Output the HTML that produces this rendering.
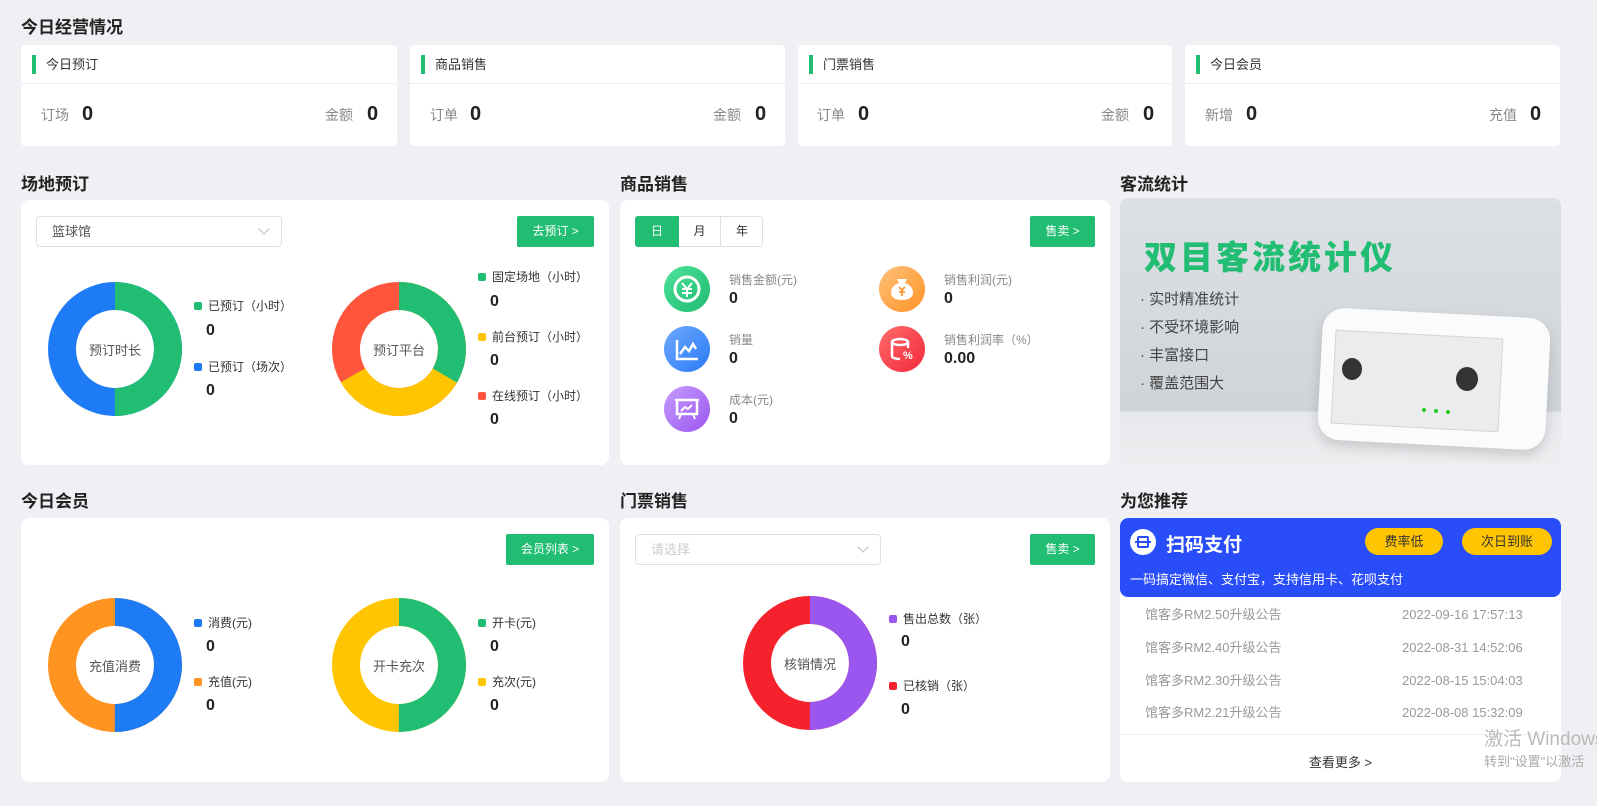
<!DOCTYPE html>
<html><head><meta charset="utf-8"><style>
*{box-sizing:border-box;margin:0;padding:0}
body{width:1597px;height:806px;background:#eef0f3;font-family:"Liberation Sans","Noto Sans CJK SC",sans-serif;position:relative;overflow:hidden;color:#333}
.abs{position:absolute}
.title{position:absolute;font-size:17px;font-weight:bold;color:#222}
.card{position:absolute;background:#fff;border-radius:4px}
.pan{position:absolute;background:#fff;border-radius:8px}
.tc .hd{height:39px;border-bottom:1px solid #eceef2;font-size:13px;line-height:39px;padding-left:25px;position:relative;color:#333}
.tc .hd:before{content:"";position:absolute;left:11px;top:10px;width:4px;height:19px;background:#20bd72}
.tc .lab{position:absolute;top:60px;font-size:14px;line-height:20px;color:#888}
.tc .val{position:absolute;top:58px;font-size:20px;line-height:22px;font-weight:bold;color:#222}
.btn{position:absolute;background:#20bd72;color:#fff;font-size:12px;text-align:center;border-radius:2px;height:31px;line-height:31px}
.sel{position:absolute;border:1px solid #dcdfe6;border-radius:4px;height:31px;font-size:13px;line-height:29px;padding-left:15px;color:#555}
.sel:after{content:"";position:absolute;right:13px;top:8px;width:7px;height:7px;border-right:1px solid #bbb;border-bottom:1px solid #bbb;transform:rotate(45deg)}
.lg{position:absolute;font-size:12px;color:#333}
.lg i{display:inline-block;width:8px;height:8px;border-radius:2px;margin-right:6px;vertical-align:0}
.lv{position:absolute;font-size:16px;font-weight:bold;color:#222}
.dc{position:absolute;font-size:13px;color:#555;text-align:center;width:120px}
.ic{position:absolute;width:46px;height:46px;border-radius:50%}
.sl{position:absolute;font-size:12px;color:#888}
.sv{position:absolute;font-size:16px;font-weight:bold;color:#222}
.nl{position:absolute;font-size:13px;line-height:16px;color:#999;white-space:nowrap}
</style></head><body>
<div class="title" style="left:21px;top:13px">今日经营情况</div>

<div class="card tc" style="left:21px;top:45px;width:376px;height:101px"><div class="hd">今日预订</div><span class="lab" style="left:20px">订场</span><span class="val" style="left:61px">0</span><span class="lab" style="left:304px">金额</span><span class="val" style="left:346px">0</span></div>
<div class="card tc" style="left:410px;top:45px;width:375px;height:101px"><div class="hd">商品销售</div><span class="lab" style="left:20px">订单</span><span class="val" style="left:60px">0</span><span class="lab" style="left:303px">金额</span><span class="val" style="left:345px">0</span></div>
<div class="card tc" style="left:798px;top:45px;width:374px;height:101px"><div class="hd">门票销售</div><span class="lab" style="left:19px">订单</span><span class="val" style="left:60px">0</span><span class="lab" style="left:303px">金额</span><span class="val" style="left:345px">0</span></div>
<div class="card tc" style="left:1185px;top:45px;width:375px;height:101px"><div class="hd">今日会员</div><span class="lab" style="left:20px">新增</span><span class="val" style="left:61px">0</span><span class="lab" style="left:304px">充值</span><span class="val" style="left:345px">0</span></div>

<div class="title" style="left:21px;top:170px">场地预订</div>
<div class="title" style="left:620px;top:170px">商品销售</div>
<div class="title" style="left:1120px;top:170px">客流统计</div>

<div class="pan" style="left:21px;top:200px;width:588px;height:265px">
<div class="sel" style="left:15px;top:16px;width:246px">篮球馆</div>
<div class="btn" style="left:496px;top:16px;width:77px">去预订 &gt;</div>
</div>
<svg class="abs" style="left:0;top:0" width="1597" height="806">
<g fill="none" stroke-width="28">
<circle cx="115" cy="349" r="53" stroke="#1e7bf6"/>
<circle cx="115" cy="349" r="53" stroke="#20bd72" stroke-dasharray="166.5 400" transform="rotate(-90 115 349)"/>
<circle cx="399" cy="349" r="53" stroke="#ff553c"/>
<circle cx="399" cy="349" r="53" stroke="#ffc500" stroke-dasharray="222 400" transform="rotate(-90 399 349)"/>
<circle cx="399" cy="349" r="53" stroke="#20bd72" stroke-dasharray="111 400" transform="rotate(-90 399 349)"/>
<circle cx="115" cy="665" r="53" stroke="#ff9421"/>
<circle cx="115" cy="665" r="53" stroke="#1e7bf6" stroke-dasharray="166.5 400" transform="rotate(-90 115 665)"/>
<circle cx="399" cy="665" r="53" stroke="#ffc500"/>
<circle cx="399" cy="665" r="53" stroke="#20bd72" stroke-dasharray="166.5 400" transform="rotate(-90 399 665)"/>
<circle cx="810" cy="663" r="53" stroke="#f5222d"/>
<circle cx="810" cy="663" r="53" stroke="#9a56ee" stroke-dasharray="166.5 400" transform="rotate(-90 810 663)"/>
</g></svg>
<div class="dc" style="left:55px;top:340px">预订时长</div>
<div class="dc" style="left:339px;top:340px">预订平台</div>
<div class="lg" style="left:194px;top:297px"><i style="background:#20bd72"></i>已预订（小时）</div><div class="lv" style="left:206px;top:322px">0</div>
<div class="lg" style="left:194px;top:358px"><i style="background:#1e7bf6"></i>已预订（场次）</div><div class="lv" style="left:206px;top:382px">0</div>
<div class="lg" style="left:478px;top:268px"><i style="background:#20bd72"></i>固定场地（小时）</div><div class="lv" style="left:490px;top:293px">0</div>
<div class="lg" style="left:478px;top:328px"><i style="background:#ffc500"></i>前台预订（小时）</div><div class="lv" style="left:490px;top:352px">0</div>
<div class="lg" style="left:478px;top:387px"><i style="background:#ff553c"></i>在线预订（小时）</div><div class="lv" style="left:490px;top:411px">0</div>

<div class="pan" style="left:620px;top:200px;width:490px;height:265px">
<div class="abs" style="left:15px;top:16px;width:128px;height:31px;border:1px solid #dcdfe6;border-radius:3px;font-size:12px;line-height:29px;color:#333">
<span class="abs" style="left:-1px;top:-1px;width:44px;height:31px;background:#20bd72;color:#fff;text-align:center;line-height:31px;border-radius:3px 0 0 3px">日</span>
<span class="abs" style="left:43px;width:42px;text-align:center;border-right:1px solid #dcdfe6">月</span>
<span class="abs" style="left:86px;width:40px;text-align:center">年</span></div>
<div class="btn" style="left:410px;top:16px;width:65px">售卖 &gt;</div>
</div>
<div class="ic" style="left:664px;top:266px;background:linear-gradient(135deg,#4de39c,#1fb96e)"><svg width="46" height="46"><circle cx="23" cy="23" r="12" fill="none" stroke="#fff" stroke-width="3"/><path d="M18 17l5 6 5-6M23 23v8M18 23h10M18 27h10" stroke="#fff" stroke-width="2" fill="none"/></svg></div>
<div class="ic" style="left:879px;top:266px;background:linear-gradient(135deg,#ffc07a,#ff9426)"><svg width="46" height="46"><path d="M18 13h10l-2 4c6 2 8 6 8 10 0 4-4 7-11 7s-11-3-11-7c0-4 2-8 8-10z" fill="#fff"/><path d="M20 21l3 3 3-3M23 24v6M20 26h6" stroke="#ff9a30" stroke-width="1.8" fill="none"/></svg></div>
<div class="ic" style="left:664px;top:326px;background:linear-gradient(135deg,#6eaaff,#2a79f5)"><svg width="46" height="46"><path d="M13 14v19h21" stroke="#fff" stroke-width="2.5" fill="none"/><path d="M16 28l5-7 4 4 4-7 3 5" stroke="#fff" stroke-width="2.5" fill="none"/></svg></div>
<div class="ic" style="left:879px;top:326px;background:linear-gradient(135deg,#ff6b6b,#f2283b)"><svg width="46" height="46"><ellipse cx="21" cy="16" rx="8" ry="3" fill="none" stroke="#fff" stroke-width="2.5"/><path d="M13 16v14c0 2 4 3 8 3M29 16v6" stroke="#fff" stroke-width="2.5" fill="none"/><text x="24" y="33" font-size="11" font-weight="bold" fill="#fff" font-family="Liberation Sans">%</text></svg></div>
<div class="ic" style="left:664px;top:386px;background:linear-gradient(135deg,#c79bff,#9a56ee)"><svg width="46" height="46"><rect x="13" y="14" width="20" height="14" fill="none" stroke="#fff" stroke-width="2.5"/><path d="M11 14h24M17 25l4-4 3 2 4-4M17 28l-2 5M29 28l2 5" stroke="#fff" stroke-width="2" fill="none"/></svg></div>
<div class="sl" style="left:729px;top:271px">销售金额(元)</div><div class="sv" style="left:729px;top:290px">0</div>
<div class="sl" style="left:944px;top:271px">销售利润(元)</div><div class="sv" style="left:944px;top:290px">0</div>
<div class="sl" style="left:729px;top:331px">销量</div><div class="sv" style="left:729px;top:350px">0</div>
<div class="sl" style="left:944px;top:331px">销售利润率（%）</div><div class="sv" style="left:944px;top:350px">0.00</div>
<div class="sl" style="left:729px;top:391px">成本(元)</div><div class="sv" style="left:729px;top:410px">0</div>

<div class="abs" style="left:1120px;top:198px;width:441px;height:267px;border-radius:8px;overflow:hidden;background:linear-gradient(180deg,#dde1e5 0%,#cfd4d9 80%,#e6e8eb 80%,#eceef0 100%)">
<div class="abs" style="left:24px;top:33px;font-size:33px;font-weight:900;color:#20bd72;letter-spacing:3px">双目客流统计仪</div>
<div class="abs" style="left:20px;top:88px;font-size:15px;color:#444;line-height:28px">· 实时精准统计<br>· 不受环境影响<br>· 丰富接口<br>· 覆盖范围大</div>
<div class="abs" style="left:200px;top:115px;width:228px;height:132px;background:#fbfbfb;border-radius:22px;box-shadow:0 6px 12px rgba(0,0,0,.15);transform:rotate(3deg)"></div>
<div class="abs" style="left:213px;top:136px;width:168px;height:94px;background:#ececec;border:1px solid #d5d5d5;transform:rotate(3deg)"></div>
<div class="abs" style="left:222px;top:160px;width:20px;height:22px;border-radius:50%;background:#333"></div>
<div class="abs" style="left:336px;top:169px;width:22px;height:24px;border-radius:50%;background:#333"></div>
<div class="abs" style="left:302px;top:210px;width:4px;height:4px;border-radius:50%;background:#2c2"></div>
<div class="abs" style="left:314px;top:211px;width:4px;height:4px;border-radius:50%;background:#2c2"></div>
<div class="abs" style="left:326px;top:212px;width:4px;height:4px;border-radius:50%;background:#2c2"></div>
</div>

<div class="title" style="left:21px;top:487px">今日会员</div>
<div class="title" style="left:620px;top:487px">门票销售</div>
<div class="title" style="left:1120px;top:487px">为您推荐</div>

<div class="pan" style="left:21px;top:518px;width:588px;height:264px;z-index:-1">
<div class="btn" style="left:485px;top:16px;width:88px">会员列表 &gt;</div></div>
<div class="dc" style="left:55px;top:656px">充值消费</div>
<div class="dc" style="left:339px;top:656px">开卡充次</div>
<div class="lg" style="left:194px;top:614px"><i style="background:#1e7bf6"></i>消费(元)</div><div class="lv" style="left:206px;top:638px">0</div>
<div class="lg" style="left:194px;top:673px"><i style="background:#ff9421"></i>充值(元)</div><div class="lv" style="left:206px;top:697px">0</div>
<div class="lg" style="left:478px;top:614px"><i style="background:#20bd72"></i>开卡(元)</div><div class="lv" style="left:490px;top:638px">0</div>
<div class="lg" style="left:478px;top:673px"><i style="background:#ffc500"></i>充次(元)</div><div class="lv" style="left:490px;top:697px">0</div>

<div class="pan" style="left:620px;top:518px;width:490px;height:264px;z-index:-1">
<div class="sel" style="left:15px;top:16px;width:246px;color:#ccc">请选择</div>
<div class="btn" style="left:410px;top:16px;width:65px">售卖 &gt;</div></div>
<div class="dc" style="left:750px;top:654px">核销情况</div>
<div class="lg" style="left:889px;top:610px"><i style="background:#9a56ee"></i>售出总数（张）</div><div class="lv" style="left:901px;top:633px">0</div>
<div class="lg" style="left:889px;top:677px"><i style="background:#f5222d"></i>已核销（张）</div><div class="lv" style="left:901px;top:701px">0</div>

<div class="pan" style="left:1120px;top:518px;width:441px;height:264px;overflow:hidden">
<div class="abs" style="left:0;top:0;width:441px;height:79px;background:#2a4dfa;border-radius:8px;color:#fff">
<div class="abs" style="left:10px;top:11px;width:26px;height:26px;border-radius:50%;background:#fff"><div class="abs" style="left:7px;top:7px;width:12px;height:12px;border:2px solid #2a4dfa;border-radius:2px"></div><div class="abs" style="left:5px;top:12px;width:16px;height:2px;background:#2a4dfa"></div></div>
<div class="abs" style="left:46px;top:12px;font-size:19px;font-weight:bold">扫码支付</div>
<div class="abs" style="left:245px;top:10px;width:78px;height:27px;border-radius:14px;background:#ffc500;color:#333;font-size:13px;text-align:center;line-height:27px">费率低</div>
<div class="abs" style="left:342px;top:10px;width:90px;height:27px;border-radius:14px;background:#ffc500;color:#333;font-size:13px;text-align:center;line-height:27px">次日到账</div>
<div class="abs" style="left:10px;top:51px;font-size:13px">一码搞定微信、支付宝，支持信用卡、花呗支付</div></div>
<div class="nl" style="left:25px;top:89px">馆客多RM2.50升级公告</div><div class="nl" style="left:282px;top:89px">2022-09-16 17:57:13</div>
<div class="nl" style="left:25px;top:122px">馆客多RM2.40升级公告</div><div class="nl" style="left:282px;top:122px">2022-08-31 14:52:06</div>
<div class="nl" style="left:25px;top:155px">馆客多RM2.30升级公告</div><div class="nl" style="left:282px;top:155px">2022-08-15 15:04:03</div>
<div class="nl" style="left:25px;top:187px">馆客多RM2.21升级公告</div><div class="nl" style="left:282px;top:187px">2022-08-08 15:32:09</div>
<div class="abs" style="left:0;top:216px;width:441px;height:1px;background:#eee"></div>
<div class="abs" style="left:0;top:234px;width:441px;text-align:center;font-size:13px;color:#333">查看更多 &gt;</div>
</div>
<div class="abs" style="left:1484px;top:724px;font-size:19px;color:#bbb;white-space:nowrap">激活 Windows</div>
<div class="abs" style="left:1484px;top:751px;font-size:13px;color:#aaa;white-space:nowrap">转到"设置"以激活</div>
</body></html>
